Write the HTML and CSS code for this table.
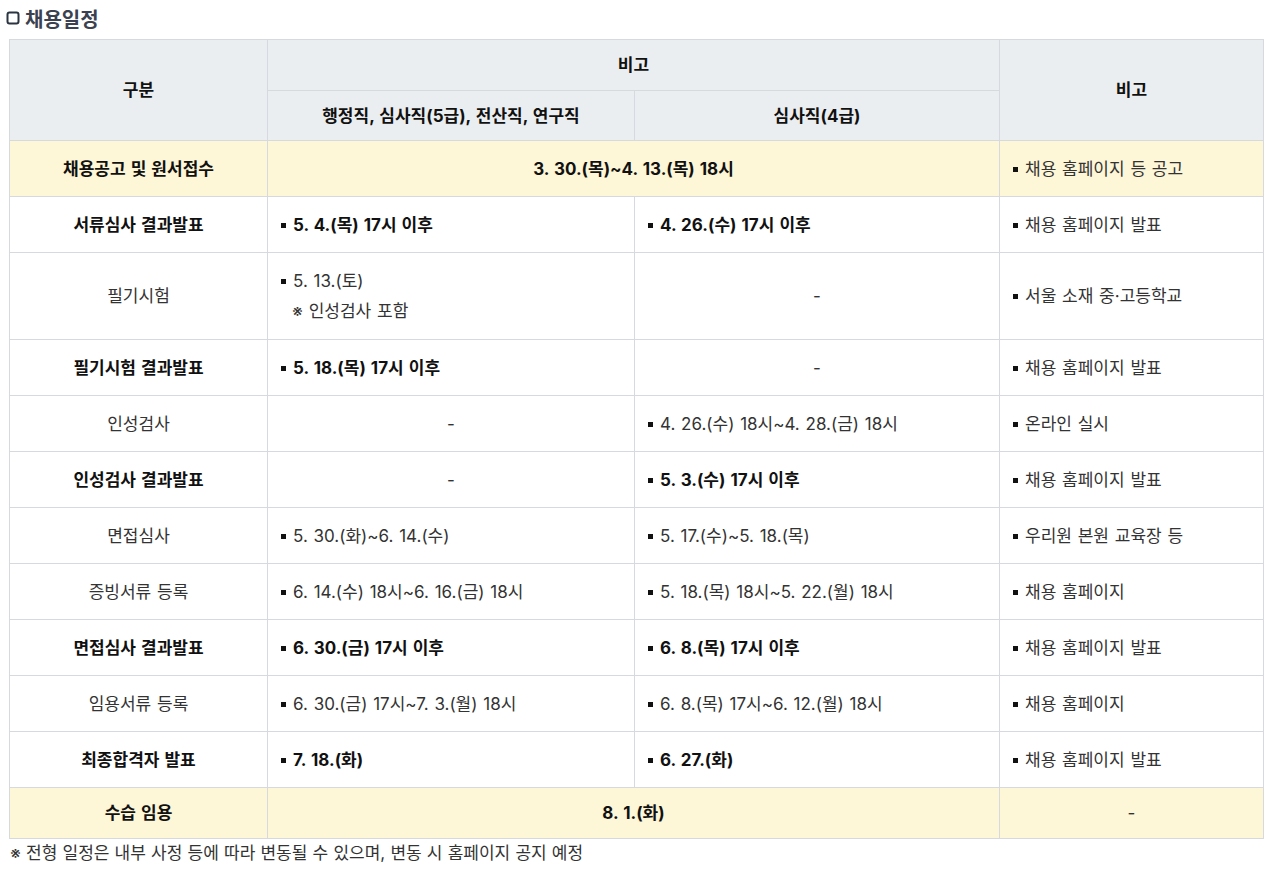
FILE: index.html
```
<!DOCTYPE html>
<html lang="ko">
<head>
<meta charset="utf-8">
<link rel="stylesheet" href="styles.css">
</head>
<body>
<h3 class="title"><svg class="chk" width="14" height="14" viewBox="0 0 14 14"><rect x="1.5" y="1.5" width="11" height="11" rx="2" fill="none" stroke="#2b3440" stroke-width="2"/></svg>채용일정</h3>
<table class="sched">
  <colgroup><col class="c1"><col class="c2"><col class="c3"><col class="c4"></colgroup>
  <thead>
    <tr class="h1"><th rowspan="2">구분</th><th colspan="2">비고</th><th rowspan="2">비고</th></tr>
    <tr class="h2"><th>행정직, 심사직(5급), 전산직, 연구직</th><th>심사직(4급)</th></tr>
  </thead>
  <tbody>
    <tr class="hl"><td class="cat b">채용공고 및 원서접수</td><td colspan="2" class="ctr b">3. 30.(목)~4. 13.(목) 18시</td><td><span class="bl">채용 홈페이지 등 공고</span></td></tr>
    <tr><td class="cat b">서류심사 결과발표</td><td class="b"><span class="bl">5. 4.(목) 17시 이후</span></td><td class="b"><span class="bl">4. 26.(수) 17시 이후</span></td><td><span class="bl">채용 홈페이지 발표</span></td></tr>
    <tr class="tall"><td class="cat">필기시험</td><td><span class="bl">5. 13.(토)</span><span class="note">※ 인성검사 포함</span></td><td class="ctr">-</td><td><span class="bl">서울 소재 중·고등학교</span></td></tr>
    <tr><td class="cat b">필기시험 결과발표</td><td class="b"><span class="bl">5. 18.(목) 17시 이후</span></td><td class="ctr">-</td><td><span class="bl">채용 홈페이지 발표</span></td></tr>
    <tr><td class="cat">인성검사</td><td class="ctr">-</td><td><span class="bl">4. 26.(수) 18시~4. 28.(금) 18시</span></td><td><span class="bl">온라인 실시</span></td></tr>
    <tr><td class="cat b">인성검사 결과발표</td><td class="ctr">-</td><td class="b"><span class="bl">5. 3.(수) 17시 이후</span></td><td><span class="bl">채용 홈페이지 발표</span></td></tr>
    <tr><td class="cat">면접심사</td><td><span class="bl">5. 30.(화)~6. 14.(수)</span></td><td><span class="bl">5. 17.(수)~5. 18.(목)</span></td><td><span class="bl">우리원 본원 교육장 등</span></td></tr>
    <tr><td class="cat">증빙서류 등록</td><td><span class="bl">6. 14.(수) 18시~6. 16.(금) 18시</span></td><td><span class="bl">5. 18.(목) 18시~5. 22.(월) 18시</span></td><td><span class="bl">채용 홈페이지</span></td></tr>
    <tr><td class="cat b">면접심사 결과발표</td><td class="b"><span class="bl">6. 30.(금) 17시 이후</span></td><td class="b"><span class="bl">6. 8.(목) 17시 이후</span></td><td><span class="bl">채용 홈페이지 발표</span></td></tr>
    <tr><td class="cat">임용서류 등록</td><td><span class="bl">6. 30.(금) 17시~7. 3.(월) 18시</span></td><td><span class="bl">6. 8.(목) 17시~6. 12.(월) 18시</span></td><td><span class="bl">채용 홈페이지</span></td></tr>
    <tr><td class="cat b">최종합격자 발표</td><td class="b"><span class="bl">7. 18.(화)</span></td><td class="b"><span class="bl">6. 27.(화)</span></td><td><span class="bl">채용 홈페이지 발표</span></td></tr>
    <tr class="hl last"><td class="cat b">수습 임용</td><td colspan="2" class="ctr b">8. 1.(화)</td><td class="ctr">-</td></tr>
  </tbody>
</table>
<p class="foot">※ 전형 일정은 내부 사정 등에 따라 변동될 수 있으며, 변동 시 홈페이지 공지 예정</p>
</body>
</html>
```
FILE: styles.css
```
html, body {
  margin: 0;
  padding: 0;
  background: #fff;
}
body {
  font-family: "Inter", "Noto Sans CJK KR", sans-serif;
  color: #333;
  font-size: 17px;
  word-spacing: 1px;
  padding: 6px 5px 0 9px;
}
.title {
  margin: 0 0 9px -3px;
  font-size: 20px;
  font-weight: 700;
  color: #3a4250;
  display: flex;
  align-items: center;
  gap: 5px;
  height: 24px;
}
.chk { display: block; }
.sched {
  width: 1255px;
  border-collapse: collapse;
  table-layout: fixed;
  border: 1px solid #d6dadf;
}
.c1 { width: 258px; }
.c2 { width: 367px; }
.c3 { width: 365px; }
.c4 { width: 264px; }
.sched th, .sched td {
  border: 1px solid #d6dadf;
  padding: 0 12px;
  vertical-align: middle;
  line-height: 24px;
}
.sched th {
  background: #ebeef0;
  color: #111;
  font-weight: 700;
  text-align: center;
}
.h1 { height: 51px; }
.h2 { height: 50px; }
.sched tbody tr { height: 56px; }
.sched tbody tr.tall { height: 87px; }
.sched tbody tr.last { height: 51px; }
.sched tr.hl td { background: #fdf6d7; }
.cat { text-align: center; }
.ctr { text-align: center; }
.b { font-weight: 700; color: #111; }
.bl {
  display: block;
  position: relative;
  padding-left: 13px;
}
.bl::before {
  content: "";
  position: absolute;
  left: 1px;
  top: 10px;
  width: 5px;
  height: 5px;
  background: #111;
}
.note {
  display: block;
  padding-left: 12px;
  margin-top: 6px;
}
.foot {
  margin: 0 0 0 1px;
  word-spacing: 0.4px;
  color: #333;
}
```
